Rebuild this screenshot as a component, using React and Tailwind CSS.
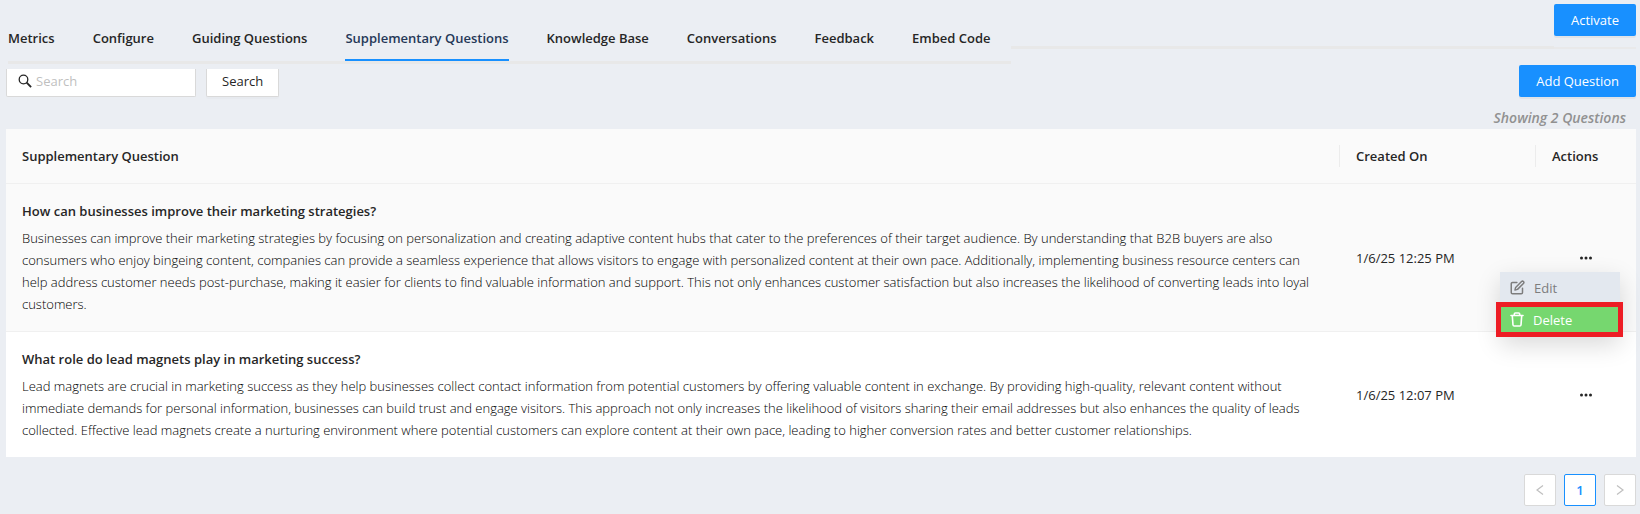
import React, { useState } from "react";
import { FiEdit } from "react-icons/fi";

const tabs = [
  "Metrics",
  "Configure",
  "Guiding Questions",
  "Supplementary Questions",
  "Knowledge Base",
  "Conversations",
  "Feedback",
  "Embed Code",
];

const questions = [
  {
    id: 1,
    title: "How can businesses improve their marketing strategies?",
    answer:
      "Businesses can improve their marketing strategies by focusing on personalization and creating adaptive content hubs that cater to the preferences of their target audience. By understanding that B2B buyers are also consumers who enjoy bingeing content, companies can provide a seamless experience that allows visitors to engage with personalized content at their own pace. Additionally, implementing business resource centers can help address customer needs post-purchase, making it easier for clients to find valuable information and support. This not only enhances customer satisfaction but also increases the likelihood of converting leads into loyal customers.",
    createdOn: "1/6/25 12:25 PM",
  },
  {
    id: 2,
    title: "What role do lead magnets play in marketing success?",
    answer:
      "Lead magnets are crucial in marketing success as they help businesses collect contact information from potential customers by offering valuable content in exchange. By providing high-quality, relevant content without immediate demands for personal information, businesses can build trust and engage visitors. This approach not only increases the likelihood of visitors sharing their email addresses but also enhances the quality of leads collected. Effective lead magnets create a nurturing environment where potential customers can explore content at their own pace, leading to higher conversion rates and better customer relationships.",
    createdOn: "1/6/25 12:07 PM",
  },
];

function SearchIcon() {
  return (
    <svg
      width="14"
      height="14"
      viewBox="0 0 14 14"
      fill="none"
      stroke="currentColor"
      className="shrink-0"
    >
      <circle cx="5.5" cy="5.5" r="4.3" strokeWidth="1.3" />
      <path d="M8.7 8.7l4.4 4.4" strokeWidth="1.9" />
    </svg>
  );
}

function TrashIcon() {
  return (
    <svg
      width="14"
      height="15"
      viewBox="0 0 14 15"
      fill="none"
      stroke="currentColor"
      strokeWidth="1.6"
      strokeLinejoin="round"
      strokeLinecap="round"
    >
      <path d="M1 3.5h12" />
      <path d="M4.3 3.3V2c0-.7.4-1 1.1-1h3.2c.7 0 1.1.3 1.1 1v1.3" />
      <path d="M2.3 3.8l.7 9.2c.1.7.5 1 1.2 1h5.6c.7 0 1.1-.3 1.2-1l.7-9.2" />
    </svg>
  );
}

function DotsIcon() {
  return (
    <svg width="14" height="14" viewBox="0 0 14 14" fill="currentColor">
      <circle cx="2.5" cy="6" r="1.5" />
      <circle cx="7" cy="6" r="1.5" />
      <circle cx="11.5" cy="6" r="1.5" />
    </svg>
  );
}

function ArrowIcon({ className }) {
  return (
    <svg
      width="12"
      height="12"
      viewBox="0 0 12 12"
      fill="none"
      stroke="currentColor"
      strokeWidth="1.2"
      className={className}
    >
      <path d="M9 1.5L3 6l6 4.5" />
    </svg>
  );
}

function RowMenu() {
  return (
    <div className="absolute top-[88px] right-4 z-10 w-[120px] text-left shadow-[0_8px_24px_rgba(0,0,0,0.15)]">
      <button
        type="button"
        className="flex h-[30px] w-full items-center gap-[9px] bg-[#e3e8ef] pt-px pl-[10px] text-[#7d7d7d]"
      >
        <FiEdit size={15} strokeWidth={2.4} />
        Edit
      </button>
      <button
        type="button"
        className="-mx-1 flex h-[35px] w-[127px] items-center gap-[9px] border-[5px] border-[#ed1c24] bg-[#76d76f] pl-[9px] text-white"
      >
        <TrashIcon />
        Delete
      </button>
    </div>
  );
}

export default function App() {
  const [activeTab, setActiveTab] = useState("Supplementary Questions");
  const [search, setSearch] = useState("");
  const [openMenu, setOpenMenu] = useState(1);

  return (
    <div className="min-h-screen bg-[#ebeef3] pb-2 font-['Open_Sans',sans-serif] text-[13px] leading-[22px] text-[#262626]">
      <header className="flex items-start pr-1 pl-2">
        <nav className="flex h-16 items-end gap-[38px] border-b-[3px] border-[#e8e8e8] pr-5 font-semibold">
          {tabs.map((tab) => (
            <a
              key={tab}
              href="#"
              onClick={() => setActiveTab(tab)}
              className={
                tab === activeTab
                  ? "border-b-2 border-[#1890ff] pb-[10px] whitespace-nowrap text-[#253858]"
                  : "border-b-2 border-transparent pb-[10px] whitespace-nowrap"
              }
            >
              {tab}
            </a>
          ))}
        </nav>
        <div className="h-[49px] flex-1 border-b-[3px] border-[#e8e8e8]"></div>
        <div className="h-[49px] border-b-2 border-[#e9e9ea] pt-1">
          <button
            type="button"
            className="h-8 rounded-xs bg-[#1890ff] px-[17px] text-white shadow-[0_2px_0_rgba(0,0,0,0.045)]"
          >
            Activate
          </button>
        </div>
      </header>

      <main className="pr-1 pl-[6px]">
        <div className="flex items-end pt-px">
          <label className="flex h-7 w-[190px] items-center rounded-b-xs border border-t-0 border-[#d9d9d9] bg-white px-[11px] pb-[3px]">
            <SearchIcon />
            <input
              type="text"
              placeholder="Search"
              aria-label="Search"
              value={search}
              onChange={(ev) => setSearch(ev.target.value)}
              className="ml-1 w-full outline-none placeholder:text-[#bfbfbf]"
            />
          </label>
          <button
            type="button"
            className="ml-[10px] h-7 rounded-b-xs border border-t-0 border-[#d9d9d9] bg-white px-[15px] pb-[3px] shadow-[0_2px_0_rgba(0,0,0,0.016)]"
          >
            Search
          </button>
          <button
            type="button"
            className="ml-auto h-8 rounded-xs bg-[#1890ff] px-[17px] text-white shadow-[0_2px_0_rgba(0,0,0,0.045)]"
          >
            Add Question
          </button>
        </div>

        <p className="mt-[10px] pr-[10px] text-right text-sm leading-[22px] font-semibold text-[#919191] italic">
          Showing 2 Questions
        </p>

        <table className="w-full table-fixed text-left">
          <thead className="bg-[#fafafa]">
            <tr className="border-b border-[#f0f0f0]">
              <th className="py-4 pl-4 font-semibold">
                <div className="border-r border-[#ececec]">
                  Supplementary Question
                </div>
              </th>
              <th className="w-[196px] py-4 pl-4 font-semibold">
                <div className="border-r border-[#ececec]">Created On</div>
              </th>
              <th className="w-[100px] px-4 py-4 font-semibold">Actions</th>
            </tr>
          </thead>
          <tbody>
            {questions.map((question) => (
              <tr
                key={question.id}
                className="border-b border-[#f0f0f0] bg-white first:bg-[#fafafa] last:border-b-0"
              >
                <td className="p-4">
                  <h3 className="mb-[5px] font-semibold">{question.title}</h3>
                  <p className="font-light text-black">{question.answer}</p>
                </td>
                <td className="p-4">{question.createdOn}</td>
                <td className="relative p-4 text-center">
                  <button
                    type="button"
                    aria-label="Actions"
                    onClick={() =>
                      setOpenMenu(openMenu === question.id ? null : question.id)
                    }
                    className="align-middle"
                  >
                    <DotsIcon />
                  </button>
                  {openMenu === question.id && <RowMenu />}
                </td>
              </tr>
            ))}
          </tbody>
        </table>

        <div className="mt-[17px] flex justify-end gap-2">
          <button
            type="button"
            aria-label="Previous page"
            className="flex size-8 items-center justify-center rounded-xs border border-[#d9d9d9] bg-white text-[#bfbfbf]"
          >
            <ArrowIcon />
          </button>
          <button
            type="button"
            className="size-8 rounded-xs border border-[#1890ff] bg-white font-semibold text-[#1890ff]"
          >
            1
          </button>
          <button
            type="button"
            aria-label="Next page"
            className="flex size-8 items-center justify-center rounded-xs border border-[#d9d9d9] bg-white text-[#bfbfbf]"
          >
            <ArrowIcon className="rotate-180" />
          </button>
        </div>
      </main>
    </div>
  );
}
